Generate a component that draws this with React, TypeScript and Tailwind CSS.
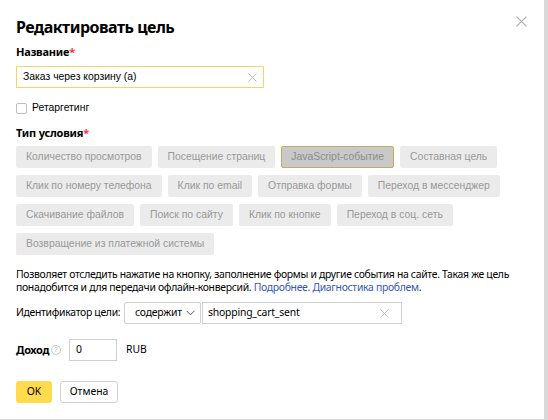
import React from "react";

const ys = { fontFamily: '"Noto Sans", "Open Sans", Arial, sans-serif' };
const arial = { fontFamily: '"Liberation Sans", Arial, sans-serif' };

const rows: { label: string; active?: boolean }[][] = [
  [
    { label: "Количество просмотров" },
    { label: "Посещение страниц" },
    { label: "JavaScript-событие", active: true },
    { label: "Составная цель" },
  ],
  [
    { label: "Клик по номеру телефона" },
    { label: "Клик по email" },
    { label: "Отправка формы" },
    { label: "Переход в мессенджер" },
  ],
  [
    { label: "Скачивание файлов" },
    { label: "Поиск по сайту" },
    { label: "Клик по кнопке" },
    { label: "Переход в соц. сеть" },
  ],
  [{ label: "Возвращение из платежной системы" }],
];

function Cross({ size = 10, color = "#b3b3b3" }: { size?: number; color?: string }) {
  return (
    <svg width={size} height={size} viewBox="0 0 10 10" fill="none">
      <path d="M0.5 0.5L9.5 9.5M9.5 0.5L0.5 9.5" stroke={color} strokeWidth="1" />
    </svg>
  );
}

export default function App() {
  return (
    <div className="w-[548px] h-[420px] bg-[#d9d9d9] overflow-hidden">
      <div className="relative w-[544px] h-[419px] bg-white px-4 pt-[16px]" style={ys}>
        <button className="absolute right-[17px] top-[16px]">
          <Cross size={11} color="#adadad" />
        </button>
        <h1 className="text-[16px] leading-[22px] font-bold text-black tracking-[-0.5px] whitespace-nowrap">
          Редактировать цель
        </h1>

        <div className="mt-[6px] text-[11px] font-bold leading-[16px] text-black tracking-[-0.2px]">
          Название<span className="text-[#f33]">*</span>
        </div>
        <div className="mt-[6px] w-[248px] h-[22px] border border-[#f7d660] flex items-center pl-[6px] pr-[6px]">
          <span className="flex-1 text-[10.4px] text-black whitespace-nowrap" style={arial}>
            Заказ через корзину (а)
          </span>
          <Cross size={9} color="#b5b5b5" />
        </div>

        <label className="mt-[13px] h-[14px] flex items-center gap-[5px]">
          <span className="w-[11px] h-[11px] border border-[#bdbdbd] rounded-[2px] bg-white" />
          <span className="text-[10.4px] text-black" style={arial}>
            Ретаргетинг
          </span>
        </label>

        <div className="mt-[10px] text-[11px] font-bold leading-[16px] text-black tracking-[-0.2px]">
          Тип условия<span className="text-[#f33]">*</span>
        </div>

        <div className="mt-[5px] flex flex-col gap-[7px]" style={arial}>
          {rows.map((row, i) => (
            <div key={i} className="flex gap-[6px]">
              {row.map((b) => (
                <div
                  key={b.label}
                  className={
                    b.active
                      ? "h-[22px] px-[9px] flex items-center whitespace-nowrap rounded-[2px] bg-[#c9c9c9] border border-[#c8aa5c] text-[10.4px] text-[#8c8c8c]"
                      : "h-[22px] px-[9px] flex items-center whitespace-nowrap rounded-[2px] bg-[#ebebeb] border border-[#ebebeb] text-[10.4px] text-[#999]"
                  }
                >
                  {b.label}
                </div>
              ))}
            </div>
          ))}
        </div>

        <p className="mt-[13px] text-[10.4px] leading-[13px] text-black whitespace-nowrap tracking-[-0.3px]">
          Позволяет отследить нажатие на кнопку, заполнение формы и другие события на сайте. Такая же цель
          <br />
          понадобится и для передачи офлайн-конверсий.{" "}
          <span className="text-[#3357b8]">Подробнее.</span>{" "}
          <span className="text-[#3357b8]">Диагностика проблем</span>.
        </p>

        <div className="mt-[8px] flex items-center">
          <span className="text-[10.4px] text-black w-[108px] whitespace-nowrap tracking-[-0.3px]">
            Идентификатор цели:
          </span>
          <div className="h-[22px] w-[77px] border border-[#d0d0d0] rounded-[2px] flex items-center pl-[10px] gap-[4px]">
            <span className="text-[10.4px] text-black tracking-[-0.2px]">содержит</span>
            <svg width="9" height="6" viewBox="0 0 9 6" fill="none">
              <path d="M0.5 0.8L4.5 4.8L8.5 0.8" stroke="#555" strokeWidth="1" />
            </svg>
          </div>
          <div className="ml-[1px] h-[22px] w-[200px] border border-[#d0d0d0] flex items-center pl-[5px] pr-[12px]">
            <span className="flex-1 text-[10.4px] text-black tracking-[-0.2px]">shopping_cart_sent</span>
            <Cross size={9} color="#c0c0c0" />
          </div>
        </div>

        <div className="mt-[15px] flex items-center">
          <span className="text-[11px] font-bold text-black tracking-[-0.4px]">Доход</span>
          <span className="ml-[2px] w-[10px] h-[10px] rounded-full border border-[#c8c8c8] text-[7px] leading-[8px] text-[#bbb] flex items-center justify-center">
            ?
          </span>
          <div className="ml-[8px] h-[22px] w-[48px] border border-[#cfcfcf] flex items-center pl-[6px]">
            <span className="text-[10.4px] text-black">0</span>
          </div>
          <span className="ml-[9px] text-[10.4px] text-black">RUB</span>
        </div>

        <div className="mt-[20px] flex gap-[8px]">
          <button className="h-[22px] w-[36px] rounded-[3px] bg-[#ffdb4d] text-[10.4px] text-black">OK</button>
          <button className="h-[22px] w-[58px] rounded-[3px] border border-[#d0d0d0] bg-white text-[10.4px] text-black">
            Отмена
          </button>
        </div>
      </div>
    </div>
  );
}
